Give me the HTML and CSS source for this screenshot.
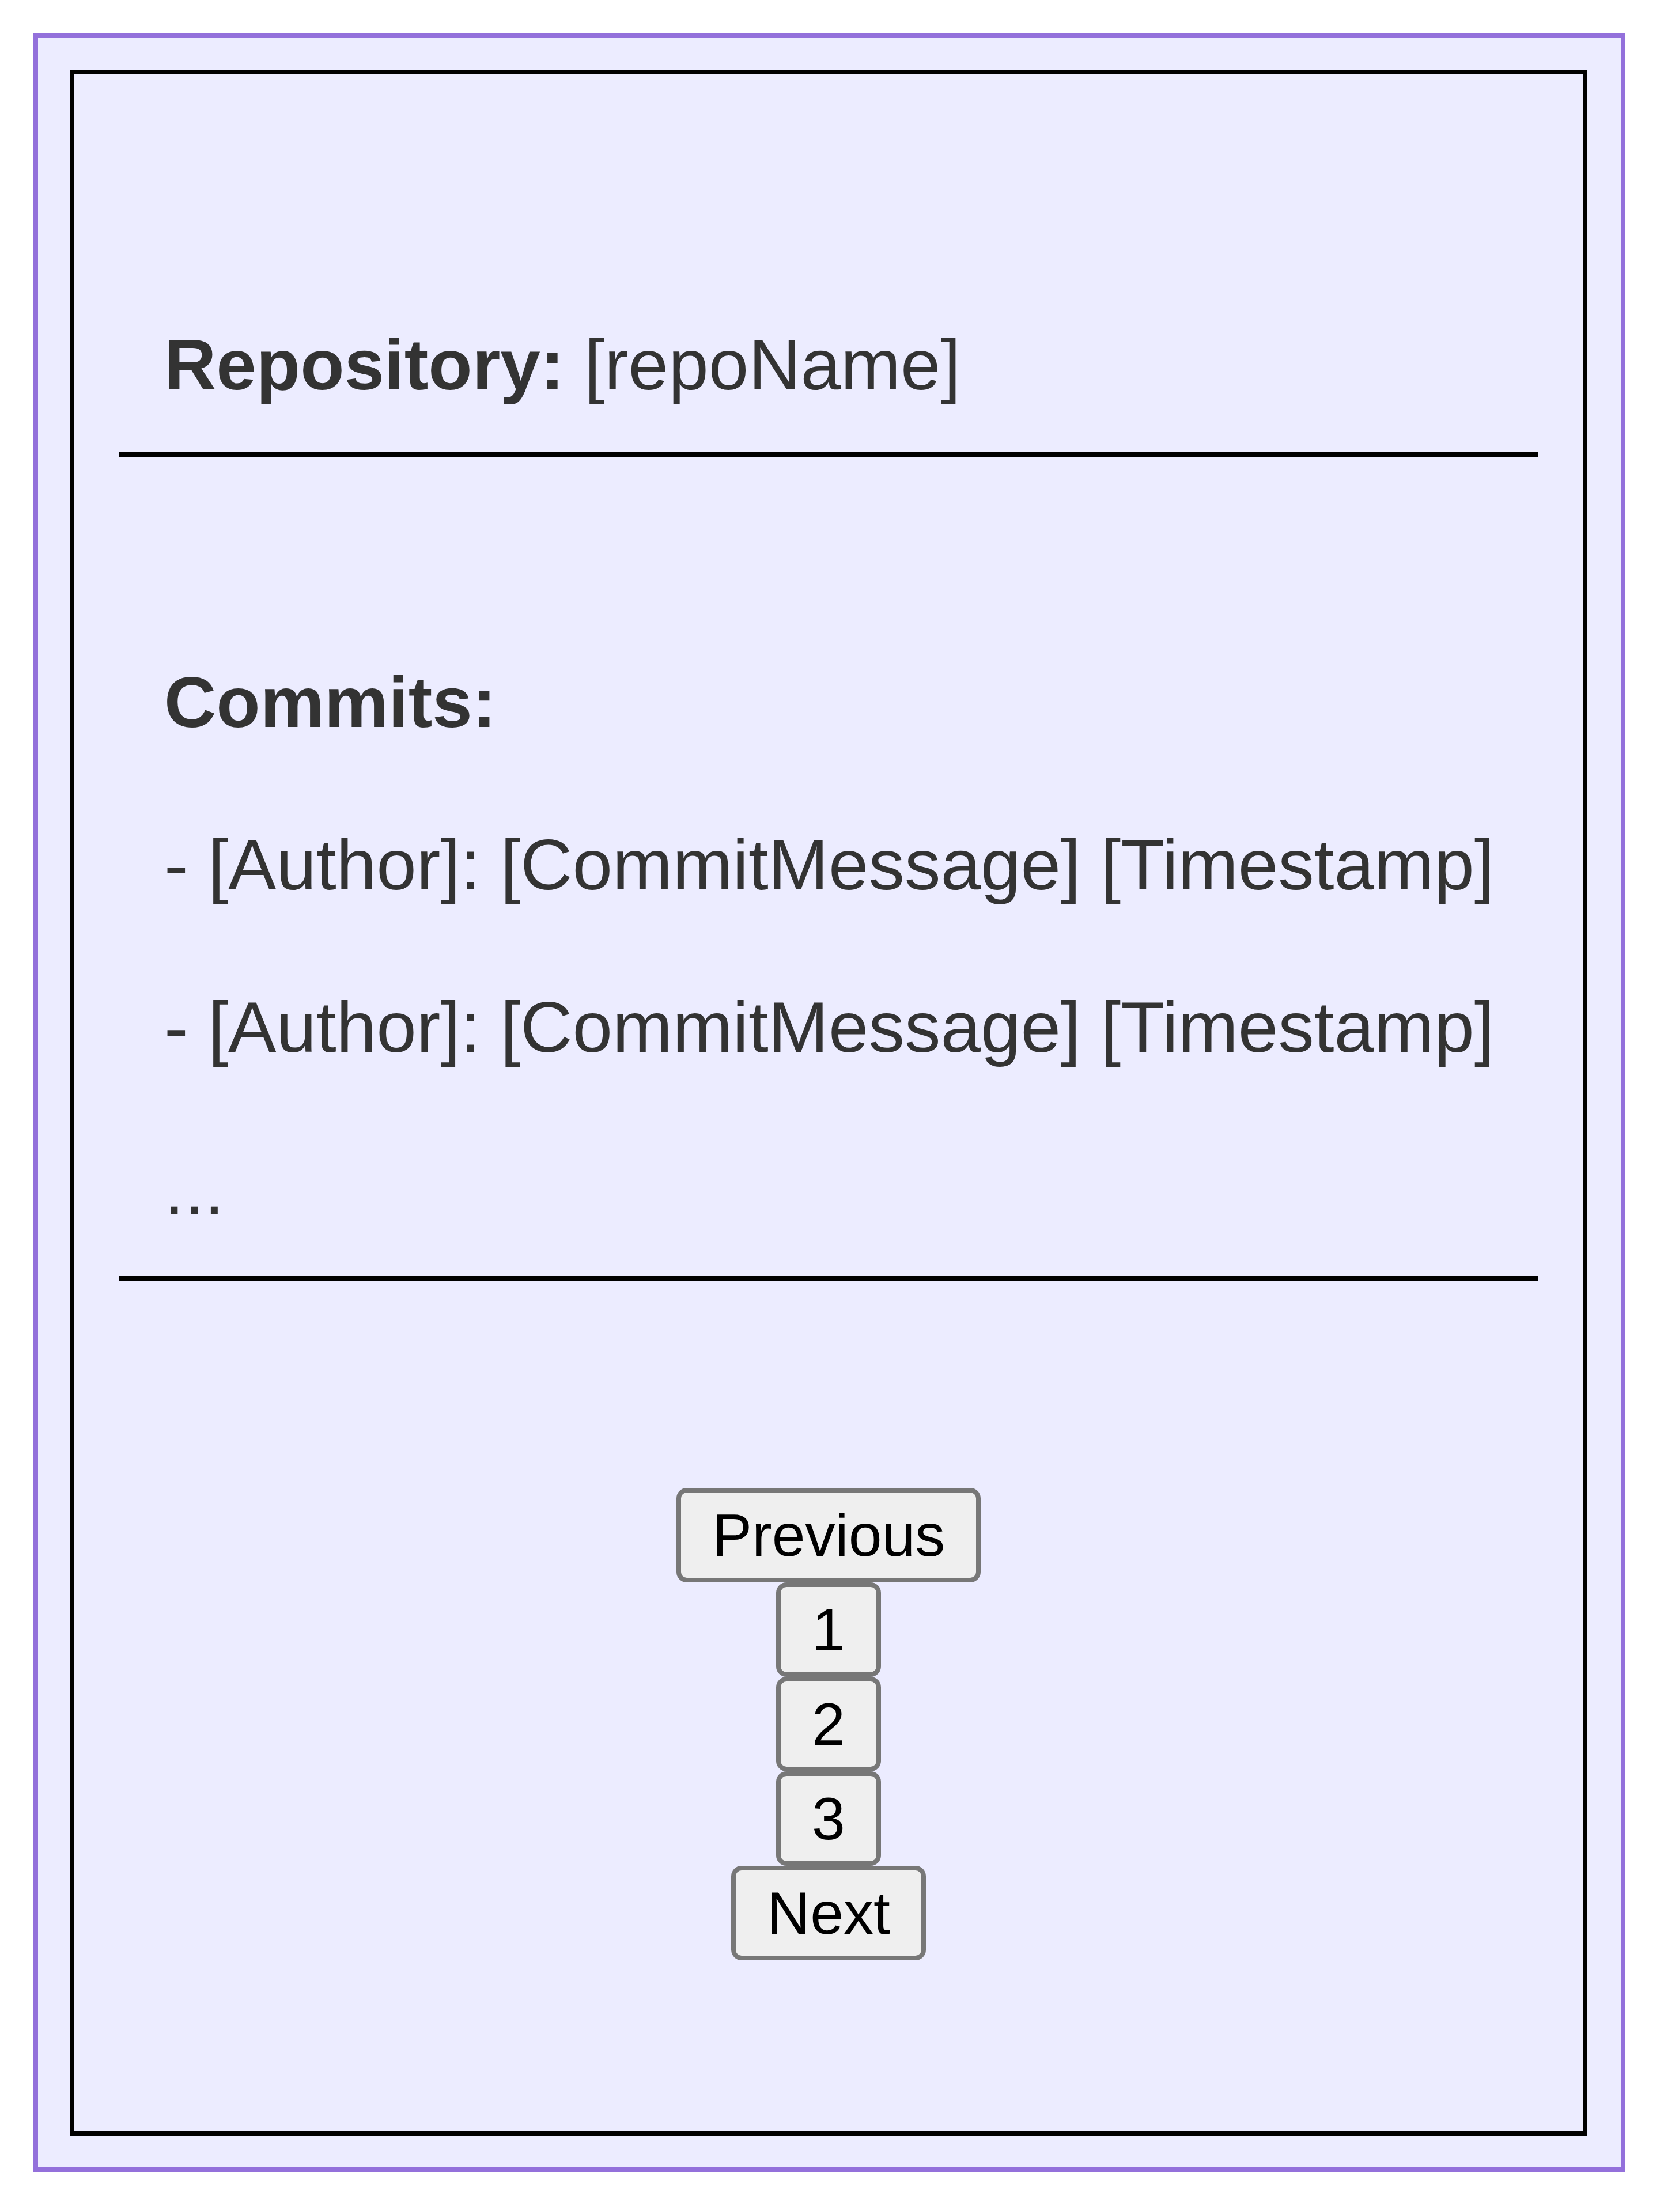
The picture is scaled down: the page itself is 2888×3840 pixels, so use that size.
FILE: index.html
```html
<!DOCTYPE html>
<html lang="en">
<head>
<meta charset="utf-8">
<title>Repository commits</title>
<link rel="stylesheet" href="styles.css">
</head>
<body>
<div class="frame">
  <div class="card">
    <p class="line"><b>Repository:</b> [repoName]</p>
    <hr class="rule rule-top">
    <p class="line"><b>Commits:</b></p>
    <p class="line">- [Author]: [CommitMessage] [Timestamp]</p>
    <p class="line">- [Author]: [CommitMessage] [Timestamp]</p>
    <p class="line">...</p>
    <hr class="rule rule-bottom">
    <div class="pager">
      <button class="btn">Previous</button>
      <button class="btn">1</button>
      <button class="btn">2</button>
      <button class="btn">3</button>
      <button class="btn">Next</button>
    </div>
  </div>
</div>
</body>
</html>
```
FILE: styles.css
```css
body {
  margin: 0;
  background: #ffffff;
  font-family: "Liberation Sans", Arial, sans-serif;
}

.frame {
  margin: 58px 0 0 58px;
  width: 2763px;
  height: 3712px;
  box-sizing: border-box;
  border: 8px solid #9370db;
  background: #ececff;
  padding: 55px 58px 54px 55px;
}

.card {
  box-sizing: border-box;
  height: 100%;
  border: 8px solid #000000;
  padding: 363px 78px 0;
  display: flex;
  flex-direction: column;
}

.line {
  margin: 0;
  padding-left: 78px;
  font-size: 125px;
  line-height: 282px;
  color: #333333;
  white-space: nowrap;
}

.line b {
  font-weight: bold;
}

.rule {
  margin: 0;
  border: 0;
  height: 8px;
  background: #000000;
  flex: none;
}

.rule-top {
  margin-top: 11px;
  margin-bottom: 285px;
}

.rule-bottom {
  margin-top: 9px;
  margin-bottom: 360px;
}

.pager {
  display: flex;
  flex-direction: column;
  align-items: center;
}

.btn {
  font-family: "Liberation Sans", Arial, sans-serif;
  font-size: 104px;
  line-height: 120px;
  padding: 14px 54px;
  margin: 0;
  border: 8px solid #777777;
  border-radius: 18px;
  background: #efefef;
  color: #000000;
}
```
